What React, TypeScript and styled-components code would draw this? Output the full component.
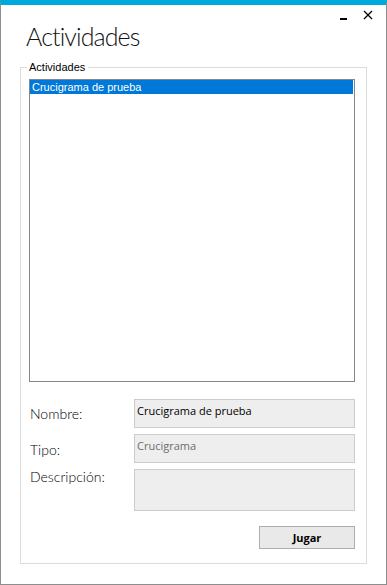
import React from "react";
import styled, { createGlobalStyle } from "styled-components";

const Global = createGlobalStyle`
  html, body { margin: 0; padding: 0; background: #ffffff; }
  * { box-sizing: border-box; }
`;

const Window = styled.div`
  width: 387px;
  height: 585px;
  background: #ffffff;
  border: 1px solid #8e8e8e;
  border-top: 5px solid #00a9dc;
  display: flex;
  flex-direction: column;
  font-family: "Open Sans", "Liberation Sans", sans-serif;
`;

const Header = styled.div`
  height: 56px;
  display: flex;
  justify-content: space-between;
  align-items: flex-start;
`;

const Title = styled.h1`
  margin: 0;
  padding: 15px 0 0 25px;
  font-family: Lato, "Open Sans", sans-serif;
  font-weight: 300;
  font-size: 25px;
  letter-spacing: -0.9px;
  line-height: 32px;
  color: #111111;
`;

const Controls = styled.div`
  display: flex;
  gap: 13px;
  padding: 5px 13px 0 0;
`;

const ControlIcon = styled.svg`
  display: block;
  width: 10px;
  height: 10px;
`;

const Group = styled.fieldset`
  margin: 0 0 0 19px;
  padding: 0;
  width: 347px;
  height: 503px;
  border: 1px solid #dcdcdc;
  min-width: 0;
`;

const Legend = styled.legend`
  margin-left: 6px;
  padding: 0 3px 0 2px;
  font-family: "Liberation Sans", Arial, sans-serif;
  font-size: 11px;
  line-height: 13px;
  color: #000000;
`;

const ListBox = styled.div`
  margin: 5px 0 0 8px;
  width: 326px;
  height: 303px;
  border: 1px solid #828790;
  background: #ffffff;
  display: flex;
  flex-direction: column;
`;

const ListItem = styled.div<{ $selected?: boolean }>`
  height: 14px;
  margin-right: 1px;
  padding-left: 2px;
  font-family: "Liberation Sans", Arial, sans-serif;
  font-size: 11px;
  line-height: 14px;
  white-space: nowrap;
  color: ${(p) => (p.$selected ? "#ffffff" : "#000000")};
  background: ${(p) => (p.$selected ? "#0078d7" : "transparent")};
`;

const Form = styled.div`
  margin: 17px 0 0 8px;
  display: grid;
  grid-template-columns: 105px 221px;
  row-gap: 6px;
`;

const Label = styled.div<{ $offset: number }>`
  padding: ${(p) => p.$offset}px 0 0 1px;
  font-family: Lato, "Open Sans", sans-serif;
  font-weight: 300;
  font-size: 14px;
  line-height: 16px;
  color: #000000;
`;

const Field = styled.div<{ $height: number; $muted?: boolean }>`
  height: ${(p) => p.$height}px;
  border: 1px solid #cccccc;
  background: #eeeeee;
  padding: 3px 0 0 2px;
  font-family: "Open Sans", sans-serif;
  font-size: 11px;
  line-height: 15px;
  color: ${(p) => (p.$muted ? "#6d6d6d" : "#000000")};
`;

const ButtonRow = styled.div`
  grid-column: 1 / span 2;
  display: flex;
  justify-content: flex-end;
  margin-top: 9px;
`;

const Button = styled.button`
  width: 96px;
  height: 23px;
  border: 1px solid #adadad;
  background: #e9e9e9;
  padding: 0;
  font-family: "Open Sans", sans-serif;
  font-weight: 700;
  font-size: 11px;
  color: #000000;
`;

export default function App() {
  return (
    <>
      <Global />
      <Window>
        <Header>
          <Title>Actividades</Title>
          <Controls>
            <ControlIcon viewBox="0 0 10 10">
              <rect x="0" y="8" width="7" height="2" fill="#000" />
            </ControlIcon>
            <ControlIcon viewBox="0 0 10 10">
              <path d="M1 1 L9 9 M9 1 L1 9" stroke="#000" strokeWidth="1.3" />
            </ControlIcon>
          </Controls>
        </Header>
        <Group>
          <Legend>Actividades</Legend>
          <ListBox>
            <ListItem $selected>Crucigrama de prueba</ListItem>
          </ListBox>
          <Form>
            <Label $offset={7}>Nombre:</Label>
            <Field $height={29}>Crucigrama de prueba</Field>
            <Label $offset={8}>Tipo:</Label>
            <Field $height={29} $muted>Crucigrama</Field>
            <Label $offset={0}>Descripción:</Label>
            <Field $height={42} />
            <ButtonRow>
              <Button>Jugar</Button>
            </ButtonRow>
          </Form>
        </Group>
      </Window>
    </>
  );
}
